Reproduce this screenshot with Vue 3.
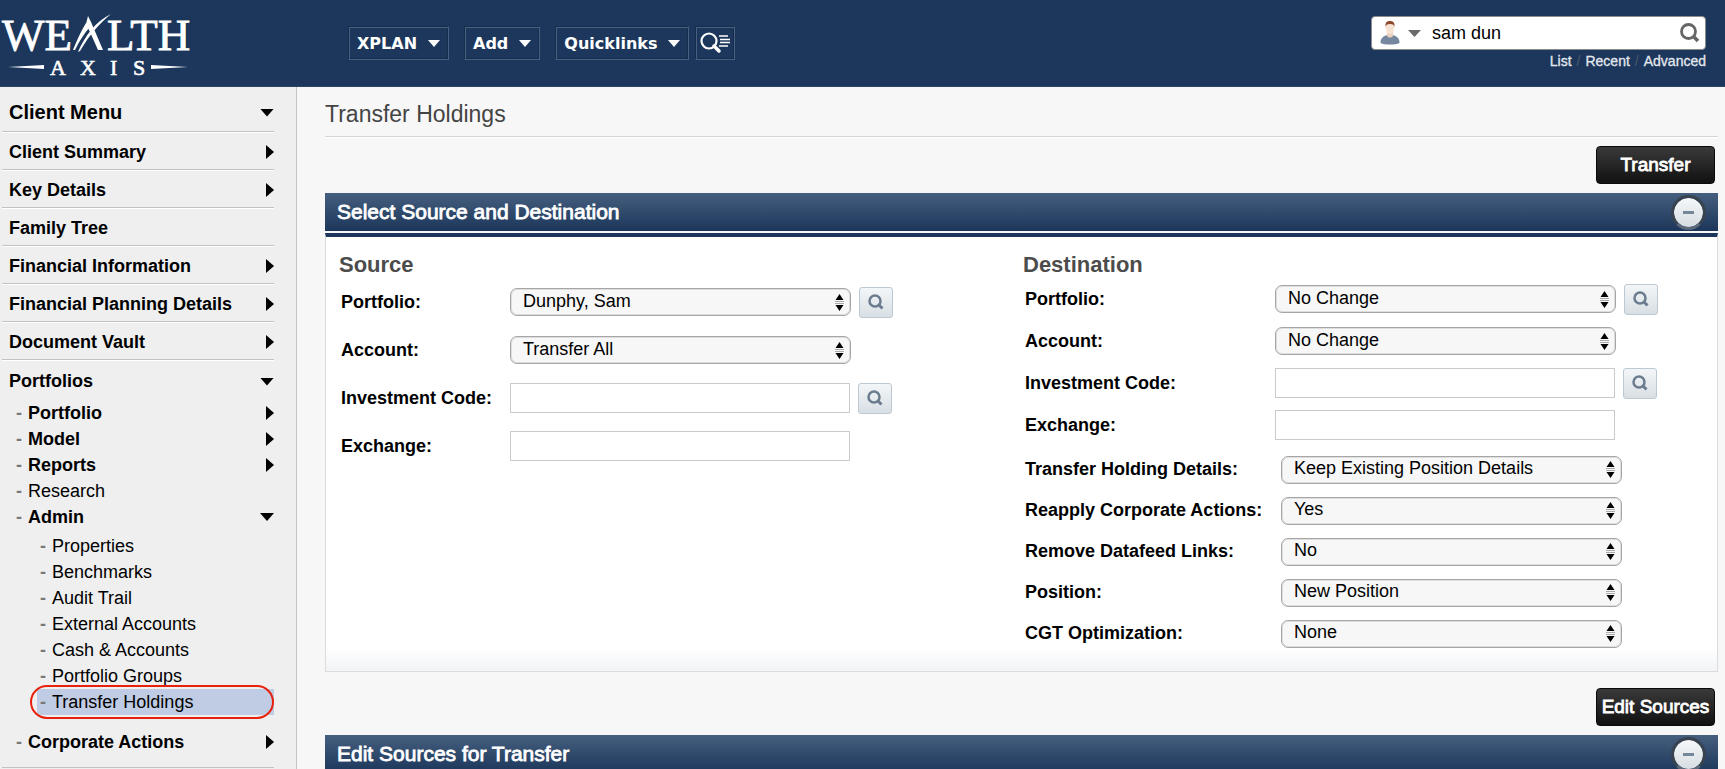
<template>
  <div class="page">
    <!-- Top bar -->
    <header class="topbar">
      <a href="#" class="brand" aria-label="Wealth Axis">
        <svg class="logo" width="196" height="86" viewBox="0 0 196 86" fill="#fff">
          <g class="logo-main">
            <text x="2" y="50">WE</text>
            <text x="107" y="50">LTH</text>
          </g>
          <path d="M88 16 L91 22 L103 50 L98 50 L90 32 L86 24 Z" />
          <path d="M86 23 L91 26 C84 33 79 42 75 50 L73 50 C77 40 81 31 86 23 Z" />
          <path d="M78 52 C85 36 95 22 111 14 C100 23 90 34 80 51 Z" />
          <path d="M8 67 L44 65 L44 69 Z" />
          <path d="M188 67 L151 65 L151 69 Z" />
          <g class="logo-sub">
            <text x="50" y="75">A</text>
            <text x="80" y="75">X</text>
            <text x="110" y="75">I</text>
            <text x="133" y="75">S</text>
          </g>
        </svg>
      </a>

      <nav class="top-nav">
        <button v-for="item in topMenus" :key="item" type="button" class="nav-button">
          {{ item }}
          <svg width="12" height="7" viewBox="0 0 12 7" fill="#fff"><path d="M0 0h12L6 7z" /></svg>
        </button>
        <button type="button" class="nav-button nav-search" aria-label="Search list">
          <svg width="30" height="22" viewBox="0 0 30 22" fill="none" stroke="#fff">
            <circle cx="9" cy="9" r="7.5" stroke-width="2.2" />
            <path d="M14 14l5 5" stroke-width="3.5" stroke-linecap="round" />
            <path d="M19 4h9M20 7.500h10M20 10.500h10M19 14h9" stroke-width="1.300" />
          </svg>
        </button>
      </nav>

      <div class="search-area">
        <div class="search-box">
          <button type="button" class="entity-button" aria-label="Search type">
            <svg width="20" height="24" viewBox="0 0 20 24">
              <path d="M0.500 22c0-5 3-7 6.500-8h6c3.500 1 6.500 3 6.500 8-4 2-15 2-19 0z" fill="#7688a0" />
              <path d="M7 11h6v4c-1.500 2-4.500 2-6 0z" fill="#ecd2bd" />
              <ellipse cx="10" cy="7" rx="4.200" ry="6" fill="#f7e3d3" />
              <path d="M5.500 6C5 1.500 7 0 10 0s5 1.500 4.500 6c-.5-2-1.500-3-4.500-3S6 4 5.500 6z" fill="#8f4a2d" />
            </svg>
            <svg width="13" height="7" viewBox="0 0 13 7" fill="#6b6b6b"><path d="M0 0h13L6.500 7z" /></svg>
          </button>
          <input v-model="query" type="text" class="search-input" aria-label="Search" />
          <button type="button" class="go-button" aria-label="Go">
            <svg width="20" height="20" viewBox="0 0 20 20" fill="none" stroke="#666">
              <circle cx="8.500" cy="8.500" r="7" stroke-width="2.800" />
              <path d="M13.500 13.500l4.500 4.500" stroke-width="3.500" />
            </svg>
          </button>
        </div>
        <div class="search-links">
          <a href="#">List</a><span>/</span><a href="#">Recent</a><span>/</span><a href="#">Advanced</a>
        </div>
      </div>
    </header>

    <div class="layout">
      <!-- Client menu -->
      <aside class="sidebar">
        <a href="#" class="menu-row menu-title">
          Client Menu
          <span class="arrow down" />
        </a>
        <a v-for="item in clientMenu" :key="item.label" href="#" class="menu-row">
          {{ item.label }}
          <span v-if="item.arrow" class="arrow" />
        </a>
        <a href="#" class="menu-row open">
          Portfolios
          <span class="arrow down" />
        </a>
        <ul class="sub-menu">
          <li v-for="item in portfolioMenu" :key="item.label">
            <a href="#" class="sub-row" :class="{ plain: item.plain }">
              <span class="dash">-</span>{{ item.label }}
              <span v-if="item.arrow" class="arrow" :class="item.arrow" />
            </a>
            <ul v-if="item.children" class="nested-menu">
              <li v-for="child in item.children" :key="child">
                <a href="#" class="sub-row plain" :class="{ selected: child === activeItem }">
                  <span class="dash">-</span>{{ child }}
                </a>
              </li>
            </ul>
          </li>
        </ul>
      </aside>

      <main class="content">
        <h1 class="page-title">Transfer Holdings</h1>

        <div class="actions">
          <button type="button" class="action-button">Transfer</button>
        </div>

        <section class="panel">
          <header class="panel-header">
            <h2>Select Source and Destination</h2>
            <button type="button" class="collapse" aria-label="Collapse"><span /></button>
          </header>
          <div class="panel-body">
            <div v-for="column in columns" :key="column.title" class="column">
              <h3>{{ column.title }}</h3>
              <div v-for="group in column.groups" :key="group.kind" class="fields" :class="group.kind">
                <div v-for="field in group.fields" :key="field.id" class="field">
                  <label :for="field.id">{{ field.label }}</label>
                  <div v-if="field.value" class="select-wrap">
                    <select :id="field.id">
                      <option>{{ field.value }}</option>
                    </select>
                    <svg width="9" height="17" viewBox="0 0 9 17">
                      <path d="M4.500 0L8.500 6h-8zM4.500 17L.5 11h8z" fill="#000" />
                      <path d="M0 7.500h9M0 9.500h9" stroke="#aaa" />
                    </svg>
                  </div>
                  <input v-else :id="field.id" type="text" />
                  <button v-if="field.lookup" type="button" class="lookup" :aria-label="'Find ' + field.label">
                    <svg width="16" height="16" viewBox="0 0 16 16" fill="none" stroke="#6b7c8e">
                      <circle cx="7" cy="7" r="5.500" stroke-width="2.500" />
                      <path d="M10.500 10.500l4 4" stroke-width="3" />
                    </svg>
                  </button>
                </div>
              </div>
            </div>
          </div>
        </section>

        <div class="actions bottom">
          <button type="button" class="action-button">Edit Sources</button>
        </div>

        <section class="panel">
          <header class="panel-header">
            <h2>Edit Sources for Transfer</h2>
            <button type="button" class="collapse" aria-label="Collapse"><span /></button>
          </header>
        </section>
      </main>
    </div>
  </div>
</template>

<script setup>
import { ref } from 'vue';

const query = ref('sam dun');
const activeItem = ref('Transfer Holdings');

const topMenus = ['XPLAN', 'Add', 'Quicklinks'];

const clientMenu = [
  { label: 'Client Summary', arrow: true },
  { label: 'Key Details', arrow: true },
  { label: 'Family Tree' },
  { label: 'Financial Information', arrow: true },
  { label: 'Financial Planning Details', arrow: true },
  { label: 'Document Vault', arrow: true }
];

const portfolioMenu = [
  { label: 'Portfolio', arrow: 'right' },
  { label: 'Model', arrow: 'right' },
  { label: 'Reports', arrow: 'right' },
  { label: 'Research', plain: true },
  {
    label: 'Admin',
    arrow: 'down',
    children: [
      'Properties',
      'Benchmarks',
      'Audit Trail',
      'External Accounts',
      'Cash & Accounts',
      'Portfolio Groups',
      'Transfer Holdings'
    ]
  },
  { label: 'Corporate Actions', arrow: 'right' }
];

const columns = [
  {
    title: 'Source',
    groups: [
      {
        kind: 'source',
        fields: [
          { id: 'src-portfolio', label: 'Portfolio:', value: 'Dunphy, Sam', lookup: true },
          { id: 'src-account', label: 'Account:', value: 'Transfer All' },
          { id: 'src-code', label: 'Investment Code:', lookup: true },
          { id: 'src-exchange', label: 'Exchange:' }
        ]
      }
    ]
  },
  {
    title: 'Destination',
    groups: [
      {
        kind: 'destination',
        fields: [
          { id: 'dst-portfolio', label: 'Portfolio:', value: 'No Change', lookup: true },
          { id: 'dst-account', label: 'Account:', value: 'No Change' },
          { id: 'dst-code', label: 'Investment Code:', lookup: true },
          { id: 'dst-exchange', label: 'Exchange:' }
        ]
      },
      {
        kind: 'options',
        fields: [
          { id: 'opt-details', label: 'Transfer Holding Details:', value: 'Keep Existing Position Details' },
          { id: 'opt-corporate', label: 'Reapply Corporate Actions:', value: 'Yes' },
          { id: 'opt-datafeed', label: 'Remove Datafeed Links:', value: 'No' },
          { id: 'opt-position', label: 'Position:', value: 'New Position' },
          { id: 'opt-cgt', label: 'CGT Optimization:', value: 'None' }
        ]
      }
    ]
  }
];
</script>

<style>
body {
  background: #f7f7f7;
}
</style>

<style scoped>
.page,
.page * {
  box-sizing: border-box;
}

.page {
  display: flex;
  flex-direction: column;
  height: 100vh;
  overflow: hidden;
  font-family: 'Liberation Sans', Arial, sans-serif;
  font-size: 18px;
  color: #000;
}

a {
  color: inherit;
  text-decoration: none;
}

button,
input,
select {
  font: inherit;
  color: inherit;
  margin: 0;
}

button {
  cursor: pointer;
}

/* Top bar */
.topbar {
  display: flex;
  flex: none;
  align-items: center;
  height: 87px;
  padding-right: 19px;
  background: #1c375b;
  border-bottom: 1px solid #2a4568;
}

.brand {
  width: 348px;
}

.logo {
  display: block;
  font-family: 'Liberation Serif', 'Times New Roman', serif;
  stroke: #fff;
}

.logo-main {
  font-size: 45px;
  stroke-width: 0.8;
}

.logo-sub {
  font-size: 22px;
  stroke-width: 0.6;
}

.logo path {
  stroke: none;
}

.top-nav {
  display: flex;
  gap: 15px;
}

.nav-button {
  display: flex;
  align-items: center;
  gap: 11px;
  height: 34px;
  padding: 0 8px;
  font-family: 'DejaVu Sans', Verdana, sans-serif;
  font-size: 16px;
  font-weight: bold;
  color: #fff;
  background: none;
  border: 1px solid;
  border-color: #152c4b #47607f #47607f #152c4b;
  box-shadow: inset 1px 1px #47607f, inset -1px -1px #152c4b;
}

.nav-search {
  margin-left: -9px;
  padding: 0 4px;
}

.search-area {
  align-self: flex-start;
  width: 335px;
  margin-left: auto;
  padding-top: 16px;
}

.search-box {
  display: flex;
  align-items: center;
  height: 34px;
  padding: 0 5px 0 8px;
  background: #fff;
  border: 1px solid #8c8c8c;
  border-radius: 4px;
}

.entity-button,
.go-button {
  display: flex;
  align-items: center;
  gap: 8px;
  padding: 0;
  background: none;
  border: 0;
}

.search-input {
  flex: 1;
  min-width: 0;
  padding: 0 11px;
  border: 0;
  outline: 0;
  background: none;
}

.search-links {
  display: flex;
  justify-content: flex-end;
  gap: 5px;
  padding-top: 2px;
  font-size: 14px;
  line-height: 18px;
  color: #e3e8ee;
  -webkit-text-stroke: 0.3px #e3e8ee;
}

.search-links span {
  color: #4c5a6c;
  -webkit-text-stroke: 0;
}

/* Client menu */
.layout {
  display: flex;
  flex: 1;
  min-height: 0;
}

.sidebar {
  flex: none;
  width: 297px;
  padding: 0 22px 0 2px;
  background: #efefef;
  border-right: 1px solid #c4c4c8;
}

.menu-row {
  display: flex;
  align-items: center;
  justify-content: space-between;
  height: 38px;
  padding: 3px 0 0 7px;
  font-weight: bold;
  border-bottom: 1px solid #c2c2c6;
  box-shadow: 0 1px #fff;
}

.menu-title {
  height: 45px;
  padding-top: 7px;
  font-size: 20px;
}

.menu-row.open {
  height: 40px;
  border: 0;
  box-shadow: none;
}

.arrow {
  width: 8px;
  height: 14px;
  margin-left: auto;
  background: #000;
  clip-path: polygon(0 0, 100% 50%, 0 100%);
}

.arrow.down {
  width: 14px;
  height: 8px;
  clip-path: polygon(0 0, 100% 0, 50% 100%);
}

.sub-menu,
.nested-menu {
  margin: 0;
  padding: 0;
  list-style: none;
}

.sub-menu {
  padding-bottom: 12px;
  border-bottom: 1px solid #c2c2c6;
}

.nested-menu {
  padding: 3px 0 14px 35px;
}

.sub-row {
  display: flex;
  align-items: center;
  height: 26px;
  padding-left: 14px;
  font-weight: bold;
}

.sub-row.plain {
  font-weight: normal;
}

.nested-menu .sub-row {
  padding-left: 3px;
}

.dash {
  width: 12px;
  font-weight: bold;
  color: #777;
}

.sub-row.selected {
  position: relative;
  background: #bfcce3;
}

.sub-row.selected::after {
  content: '';
  position: absolute;
  inset: -4px 0 -4px -7px;
  border: 2px solid #e8200c;
  border-radius: 17px;
}

/* Content */
.content {
  flex: 1;
  min-width: 0;
  padding: 0 7px 0 28px;
}

.page-title {
  height: 50px;
  margin: 0;
  padding-top: 14px;
  font-size: 23px;
  line-height: 26px;
  font-weight: normal;
  color: #444;
  border-bottom: 1px solid #d5d5d5;
  box-shadow: 0 1px #fff;
}

.actions {
  display: flex;
  justify-content: flex-end;
  padding: 9px 3px;
}

.actions.bottom {
  padding-top: 16px;
}

.action-button {
  width: 119px;
  height: 38px;
  padding: 0;
  font-size: 19px;
  color: #fff;
  -webkit-text-stroke: 0.8px #fff;
  background: linear-gradient(#3a3a3a, #111);
  border: 1px solid #0a0a0a;
  border-radius: 4px;
}

.panel-header {
  display: flex;
  align-items: center;
  justify-content: space-between;
  height: 38px;
  padding: 0 12px;
  background: linear-gradient(#465f7f, #1b365a);
}

.panel-header h2 {
  margin: 0;
  font-size: 21px;
  font-weight: normal;
  color: #fff;
  -webkit-text-stroke: 0.8px #fff;
}

.collapse {
  display: flex;
  align-items: center;
  justify-content: center;
  width: 35px;
  height: 35px;
  padding: 0;
  background: linear-gradient(#f6f8f9, #d6dde2);
  background-clip: padding-box;
  border: 3px solid #38434f;
  border-bottom-color: #5a6878;
  border-radius: 50%;
}

.collapse span {
  width: 11px;
  height: 3px;
  background: #74889a;
}

.panel-body {
  display: grid;
  grid-template-columns: 1fr 1fr;
  margin-top: 2px;
  padding: 15px 10px 17px 13px;
  background: linear-gradient(to top, #f2f3f5, #fff 24px);
  border: 1px solid #dcdcde;
  border-top: 4px solid #1b365a;
}

.column h3 {
  margin: 0;
  font-size: 22px;
  line-height: 26px;
  color: #4c4c4c;
}

.fields {
  padding-left: 2px;
}

.field {
  display: flex;
  align-items: center;
  height: 48px;
}

.destination {
  padding-bottom: 3px;
}

.destination .field {
  height: 42px;
}

.options .field {
  height: 41px;
}

.field label {
  flex: none;
  width: 169px;
  font-weight: bold;
}

.destination label {
  width: 250px;
}

.options label {
  width: 256px;
}

.select-wrap {
  display: grid;
  align-items: center;
  width: 341px;
}

.select-wrap > * {
  grid-area: 1 / 1;
}

.select-wrap svg {
  justify-self: end;
  margin-right: 7px;
  pointer-events: none;
}

select {
  width: 100%;
  height: 28px;
  padding: 0 24px 3px 12px;
  appearance: none;
  background: #f7f7f7;
  border: 1px solid #a6a6a6;
  border-radius: 7px;
  box-shadow: inset 0 0 0 1px #dedede;
}

.field input {
  width: 340px;
  height: 30px;
  padding: 0 8px;
  background: #fff;
  border: 1px solid #cacaca;
}

.lookup {
  display: flex;
  align-items: center;
  justify-content: center;
  width: 34px;
  height: 31px;
  margin-left: 8px;
  padding: 0;
  background: linear-gradient(#f3f6f8, #d8dfe4);
  border: 1px solid #bcc8d2;
  border-radius: 3px;
}
</style>
